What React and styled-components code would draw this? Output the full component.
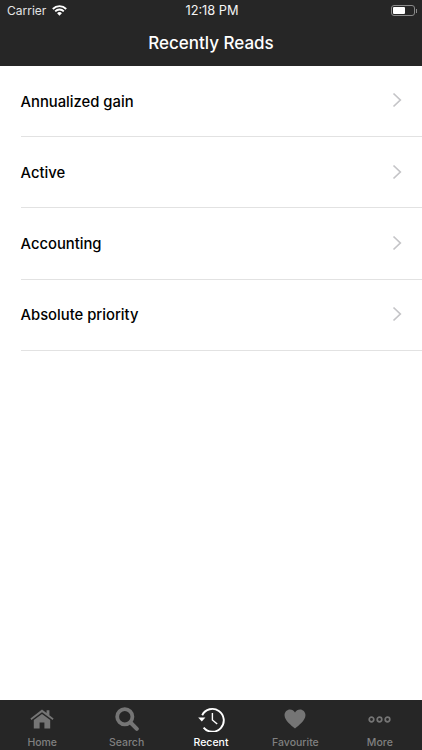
import styled, { createGlobalStyle } from 'styled-components'

const items = ['Annualized gain', 'Active', 'Accounting', 'Absolute priority']

const HomeIcon = () => (
  <svg width="24" height="20" viewBox="0 0 24 20">
    <path fill="#757575" d="M12 0.5 L16.6 4 V1.2 H19.4 V6.2 L23.6 9.6 L22.6 11 L12 3.2 L1.4 11 L0.4 9.6 Z" />
    <path fill="#757575" d="M12 5 L20.2 11 V19.6 H14.4 V13.6 H9.6 V19.6 H3.8 V11 Z" />
  </svg>
)

const SearchIcon = () => (
  <svg width="24" height="24" viewBox="0 0 24 24">
    <circle cx="9.8" cy="9.8" r="7.6" fill="none" stroke="#757575" strokeWidth="3.8" />
    <path d="M15.5 15.5 L21.8 21.8" stroke="#757575" strokeWidth="4" strokeLinecap="round" />
  </svg>
)

const RecentIcon = () => (
  <svg width="27" height="25" viewBox="0 0 27 25">
    <path d="M4.2 8.2 A11.4 11.4 0 1 1 5.6 20.6" fill="none" stroke="#fff" strokeWidth="1.9" />
    <path d="M0.2 10.4 L7.4 10.4 L3.8 14.6 Z" fill="#fff" />
    <path d="M14.4 6 V13 L19.2 17" fill="none" stroke="#fff" strokeWidth="1.4" />
  </svg>
)

const HeartIcon = () => (
  <svg width="22" height="20" viewBox="0 0 24 22">
    <path fill="#757575" d="M12 21.5 C8 18 0.5 12.5 0.5 6.8 C0.5 3 3.3 0.5 6.5 0.5 C8.8 0.5 10.8 1.7 12 3.8 C13.2 1.7 15.2 0.5 17.5 0.5 C20.7 0.5 23.5 3 23.5 6.8 C23.5 12.5 16 18 12 21.5 Z" />
  </svg>
)

const MoreIcon = () => (
  <svg width="23" height="7" viewBox="0 0 23 7">
    <circle cx="3.5" cy="3.5" r="2.3" fill="none" stroke="#757575" strokeWidth="1.7" />
    <circle cx="11.5" cy="3.5" r="2.3" fill="none" stroke="#757575" strokeWidth="1.7" />
    <circle cx="19.5" cy="3.5" r="2.3" fill="none" stroke="#757575" strokeWidth="1.7" />
  </svg>
)

const tabs = [
  { label: 'Home', icon: <HomeIcon /> },
  { label: 'Search', icon: <SearchIcon /> },
  { label: 'Recent', icon: <RecentIcon />, active: true },
  { label: 'Favourite', icon: <HeartIcon /> },
  { label: 'More', icon: <MoreIcon /> },
]

const App = () => {
  return (
    <Screen>
      <GlobalStyle />
      <Header>
        <StatusBar>
          <Carrier>
            Carrier
            <svg width="15" height="11" viewBox="0 0 15 11">
              <path d="M0.8 4 A9.4 9.4 0 0 1 14.2 4" fill="none" stroke="#fff" strokeWidth="1.8" />
              <path d="M3.2 6.3 A6 6 0 0 1 11.8 6.3" fill="none" stroke="#fff" strokeWidth="1.8" />
              <path d="M5.1 8.2 A3.2 3.2 0 0 1 9.9 8.2 L7.5 10.8 Z" fill="#fff" />
            </svg>
          </Carrier>
          <Clock>12:18 PM</Clock>
          <Battery>
            <BatteryBody>
              <BatteryLevel />
            </BatteryBody>
            <BatteryCap />
          </Battery>
        </StatusBar>
        <Title>Recently Reads</Title>
      </Header>
      <List>
        {items.map(item => (
          <Row key={item}>
            <RowLabel>{item}</RowLabel>
            <Chevron width="10" height="16" viewBox="0 0 10 16">
              <path d="M1.5 1.5 L8.3 8 L1.5 14.5" fill="none" stroke="#c4c4c7" strokeWidth="1.7" />
            </Chevron>
          </Row>
        ))}
      </List>
      <TabBar>
        {tabs.map(tab => (
          <Tab key={tab.label} $active={tab.active}>
            <TabIcon>{tab.icon}</TabIcon>
            {tab.label}
          </Tab>
        ))}
      </TabBar>
    </Screen>
  )
}

export default App

const GlobalStyle = createGlobalStyle`
  html, body {
    margin: 0;
    padding: 0;
    background: #fff;
  }
  * {
    box-sizing: border-box;
  }
`

const Screen = styled.div`
  width: 422px;
  height: 750px;
  display: flex;
  flex-direction: column;
  overflow: hidden;
  font-family: Inter, "Liberation Sans", sans-serif;
`

const Header = styled.div`
  height: 66px;
  background: #262626;
  color: #fff;
`

const StatusBar = styled.div`
  height: 21px;
  padding: 0 5px 0 7px;
  display: grid;
  grid-template-columns: 1fr auto 1fr;
  align-items: center;
  font-size: 12.5px;
`

const Carrier = styled.div`
  display: flex;
  align-items: center;
  gap: 6px;
  font-size: 12px;
  color: #e4e4e4;
`

const Clock = styled.div`
  font-size: 12.8px;
  color: #f4f4f4;
`

const Battery = styled.div`
  display: flex;
  align-items: center;
  justify-content: flex-end;
`

const BatteryBody = styled.div`
  width: 24px;
  height: 11px;
  padding: 1px 1.5px;
  border: 1px solid #8a8a8a;
  border-radius: 3px;
`

const BatteryLevel = styled.div`
  width: 12px;
  height: 100%;
  background: #fff;
  border-radius: 1px;
`

const BatteryCap = styled.div`
  width: 1.5px;
  height: 4px;
  margin-left: 1px;
  background: #8a8a8a;
`

const Title = styled.div`
  height: 44px;
  display: flex;
  align-items: center;
  justify-content: center;
  font-size: 17px;
  font-weight: 500;
`

const List = styled.div`
  flex: 1;
  padding-left: 20.5px;
`

const Row = styled.div`
  height: 71.2px;
  padding-right: 20px;
  display: flex;
  align-items: center;
  justify-content: space-between;
  border-bottom: 1px solid #e2e2e2;
`

const RowLabel = styled.div`
  margin-top: 1px;
  font-size: 14.8px;
  font-weight: 450;
  color: #000;
`

const Chevron = styled.svg`
  margin-top: -1.5px;
`

const TabBar = styled.div`
  height: 50.5px;
  padding-top: 1px;
  background: #262626;
  display: flex;
`

const Tab = styled.div`
  flex: 1;
  display: flex;
  flex-direction: column;
  align-items: center;
  font-size: 10.5px;
  font-weight: 500;
  line-height: 10px;
  color: ${props => (props.$active ? '#fff' : '#808080')};
`

const TabIcon = styled.div`
  height: 37px;
  display: flex;
  align-items: center;
  justify-content: center;
`
